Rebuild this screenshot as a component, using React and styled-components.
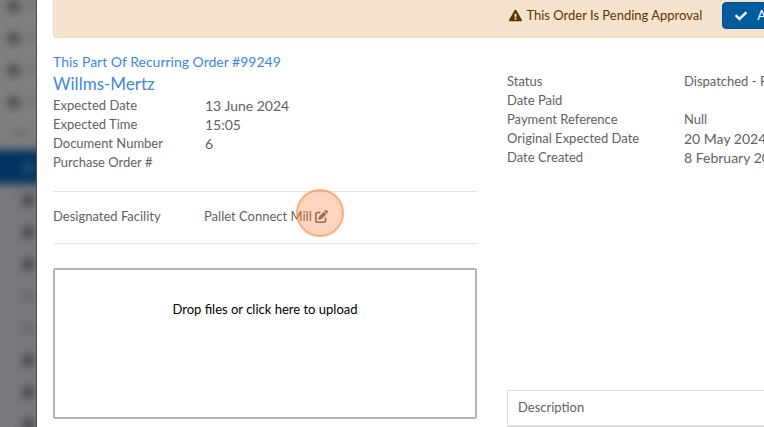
import React from "react";
import styled, { createGlobalStyle } from "styled-components";
import { FaExclamationTriangle, FaCheck } from "react-icons/fa";
import { FaPenToSquare } from "react-icons/fa6";

const GlobalStyle = createGlobalStyle`
  *, *::before, *::after { box-sizing: border-box; }
  body {
    margin: 0;
    overflow: hidden;
    background: #fff;
    color: #626262;
    font: 13px/19px Lato, "Open Sans", sans-serif;
  }
  button { font: inherit; }
`;

const Page = styled.div`
  display: grid;
  grid-template-columns: 37px minmax(0, 1fr);
  height: 100vh;
  overflow: hidden;
`;

const Sidebar = styled.nav`
  overflow: hidden;
  background: linear-gradient(#7f7f7f 140px, #77797e 190px);
  border-right: 1px solid #4d4e50;
`;

const Menu = styled.ul`
  margin: -10px -12px 0;
  padding: 0;
  list-style: none;
  filter: blur(4px);
`;

const MenuItem = styled.li`
  display: flex;
  align-items: center;
  height: ${(p) => (p.$active ? 34 : 32)}px;
  padding-left: ${(p) => (p.$nested ? 35 : 20)}px;
  background: ${(p) => (p.$active ? "#003260" : "transparent")};
`;

const MenuMark = styled.span`
  width: ${(p) => (p.$wide ? 24 : 11)}px;
  height: ${(p) => (p.$wide ? 6 : 11)}px;
  border-radius: 4px;
  background: ${(p) => p.$tone};
`;

const MenuText = styled.span`
  width: 16px;
  height: 6px;
  margin-left: 4px;
  background: #747474;
`;

const Main = styled.main`
  min-width: 0;
  padding-left: 16px;
`;

const Columns = styled.div`
  display: grid;
  grid-template-columns: minmax(0, 424fr) minmax(0, 257fr);
  column-gap: 30px;
`;

const Banner = styled(Columns)`
  height: 38px;
  border: solid #efd9b8;
  border-width: 0 0 1px 1px;
  border-radius: 0 0 0 4px;
  background: #f5e3cd;
  color: #5c3600;
`;

const BannerContent = styled.div`
  grid-column: 2;
  display: flex;
  align-items: flex-start;
  gap: 20px;
  padding: 2px 0 0 2px;
  white-space: nowrap;
`;

const Notice = styled.span`
  display: flex;
  align-items: center;
  gap: 4px;
  height: 26px;
`;

const ApproveButton = styled.button`
  display: flex;
  flex: none;
  align-items: center;
  gap: 10px;
  width: 106px;
  height: 27px;
  padding: 0 12px;
  border: 1px solid #00528c;
  border-radius: 4px;
  background: #005c9c;
  color: #fff;
  cursor: pointer;
`;

const OrderColumn = styled.section`
  padding-top: 14px;
`;

const StatusColumn = styled.section`
  display: flex;
  flex-direction: column;
  gap: 223px;
  padding-top: 34px;
  overflow: hidden;
`;

const OrderLink = styled.a`
  display: block;
  color: #3f86e3;
  font-size: ${(p) => (p.$large ? 17 : 14)}px;
  line-height: ${(p) => (p.$large ? 24 : 20)}px;
  text-decoration: none;
`;

const Details = styled.dl`
  display: grid;
  grid-template-columns: ${(p) => p.$labelWidth}px max-content;
  grid-auto-rows: 19px;
  margin: 0;
  white-space: nowrap;
`;

const Term = styled.dt`
  grid-column: 1;
`;

const Value = styled.dd`
  grid-column: 2;
  margin: 0;
  font-size: ${(p) => (p.$numeric ? 14 : 13)}px;
`;

const Facility = styled.div`
  display: flex;
  align-items: center;
  height: 53px;
  margin: 19px 0 24px;
  padding-bottom: 2px;
  border: solid #e2e2e2;
  border-width: 1px 0;
`;

const FacilityLabel = styled.span`
  flex: 0 0 151px;
`;

const EditButton = styled.button`
  position: relative;
  display: flex;
  margin-left: 3px;
  padding: 0;
  border: 0;
  background: none;
  color: #626262;
  cursor: pointer;
`;

const ClickHighlight = styled.span`
  position: absolute;
  top: -21px;
  left: -19px;
  width: 48px;
  height: 48px;
  border: 2px solid rgba(255, 128, 60, 0.5);
  border-radius: 50%;
  background: rgba(255, 128, 60, 0.33);
`;

const HiddenInput = styled.input`
  position: absolute;
  opacity: 0;
  width: 1px;
  height: 1px;
`;

const DropZone = styled.label`
  display: block;
  height: 151px;
  padding-top: 30px;
  border: 2px solid #b5b5b5;
  border-radius: 2px;
  color: #000;
  text-align: center;
  cursor: pointer;
`;

const ItemsTable = styled.table`
  width: 100%;
  border-collapse: collapse;
  border: solid #dedfe1;
  border-width: 1px 0 0 1px;
`;

const HeaderCell = styled.th`
  height: 35px;
  padding: 0 10px;
  border-bottom: 2px solid #dedfe1;
  font-weight: inherit;
  text-align: left;
`;

const menu = [
  { tone: "#484848", text: true },
  { tone: "#484848", text: true },
  { tone: "#484848", text: true },
  { tone: "#484848", text: true },
  { tone: "#707070", wide: true },
  { tone: "#2c4f74", nested: true, active: true },
  { tone: "#3e4042", nested: true },
  { tone: "#3e4042", nested: true },
  { tone: "#3e4042", nested: true },
  { tone: "#66686b", nested: true },
  { tone: "#66686b", nested: true },
  { tone: "#3e4042", nested: true },
  { tone: "#3e4042", nested: true },
  { tone: "#3e4042", nested: true },
];

const orderDetails = [
  { label: "Expected Date", value: "13 June 2024", numeric: true },
  { label: "Expected Time", value: "15:05", numeric: true },
  { label: "Document Number", value: "6", numeric: true },
  { label: "Purchase Order #", value: "" },
];

const statusDetails = [
  { label: "Status", value: "Dispatched - Pending" },
  { label: "Date Paid", value: "" },
  { label: "Payment Reference", value: "Null" },
  { label: "Original Expected Date", value: "20 May 2024", numeric: true },
  { label: "Date Created", value: "8 February 2024", numeric: true },
];

function DetailList({ rows, labelWidth }) {
  return (
    <Details $labelWidth={labelWidth}>
      {rows.map((row) => (
        <React.Fragment key={row.label}>
          <Term>{row.label}</Term>
          <Value $numeric={row.numeric}>{row.value}</Value>
        </React.Fragment>
      ))}
    </Details>
  );
}

export default function App() {
  return (
    <>
      <GlobalStyle />
      <Page>
        <Sidebar aria-label="Main menu">
          <Menu>
            {menu.map((item, i) => (
              <MenuItem key={i} $nested={item.nested} $active={item.active}>
                <MenuMark $tone={item.tone} $wide={item.wide} />
                {item.text && <MenuText />}
              </MenuItem>
            ))}
          </Menu>
        </Sidebar>
        <Main>
          <Banner>
            <BannerContent>
              <Notice>
                <FaExclamationTriangle size={13} aria-hidden="true" />
                This Order Is Pending Approval
              </Notice>
              <ApproveButton type="button">
                <FaCheck size={12} aria-hidden="true" />
                Approve
              </ApproveButton>
            </BannerContent>
          </Banner>
          <Columns>
            <OrderColumn>
              <OrderLink href="#recurring">This Part Of Recurring Order #99249</OrderLink>
              <OrderLink href="#customer" $large>Willms-Mertz</OrderLink>
              <DetailList rows={orderDetails} labelWidth={152} />
              <Facility>
                <FacilityLabel>Designated Facility</FacilityLabel>
                <span>Pallet Connect Mill</span>
                <EditButton type="button" aria-label="Edit facility">
                  <FaPenToSquare size={13} aria-hidden="true" />
                  <ClickHighlight />
                </EditButton>
              </Facility>
              <DropZone htmlFor="upload">
                Drop files or click here to upload
                <HiddenInput id="upload" type="file" multiple />
              </DropZone>
            </OrderColumn>
            <StatusColumn>
              <DetailList rows={statusDetails} labelWidth={177} />
              <ItemsTable>
                <thead>
                  <tr>
                    <HeaderCell scope="col">Description</HeaderCell>
                  </tr>
                </thead>
              </ItemsTable>
            </StatusColumn>
          </Columns>
        </Main>
      </Page>
    </>
  );
}
